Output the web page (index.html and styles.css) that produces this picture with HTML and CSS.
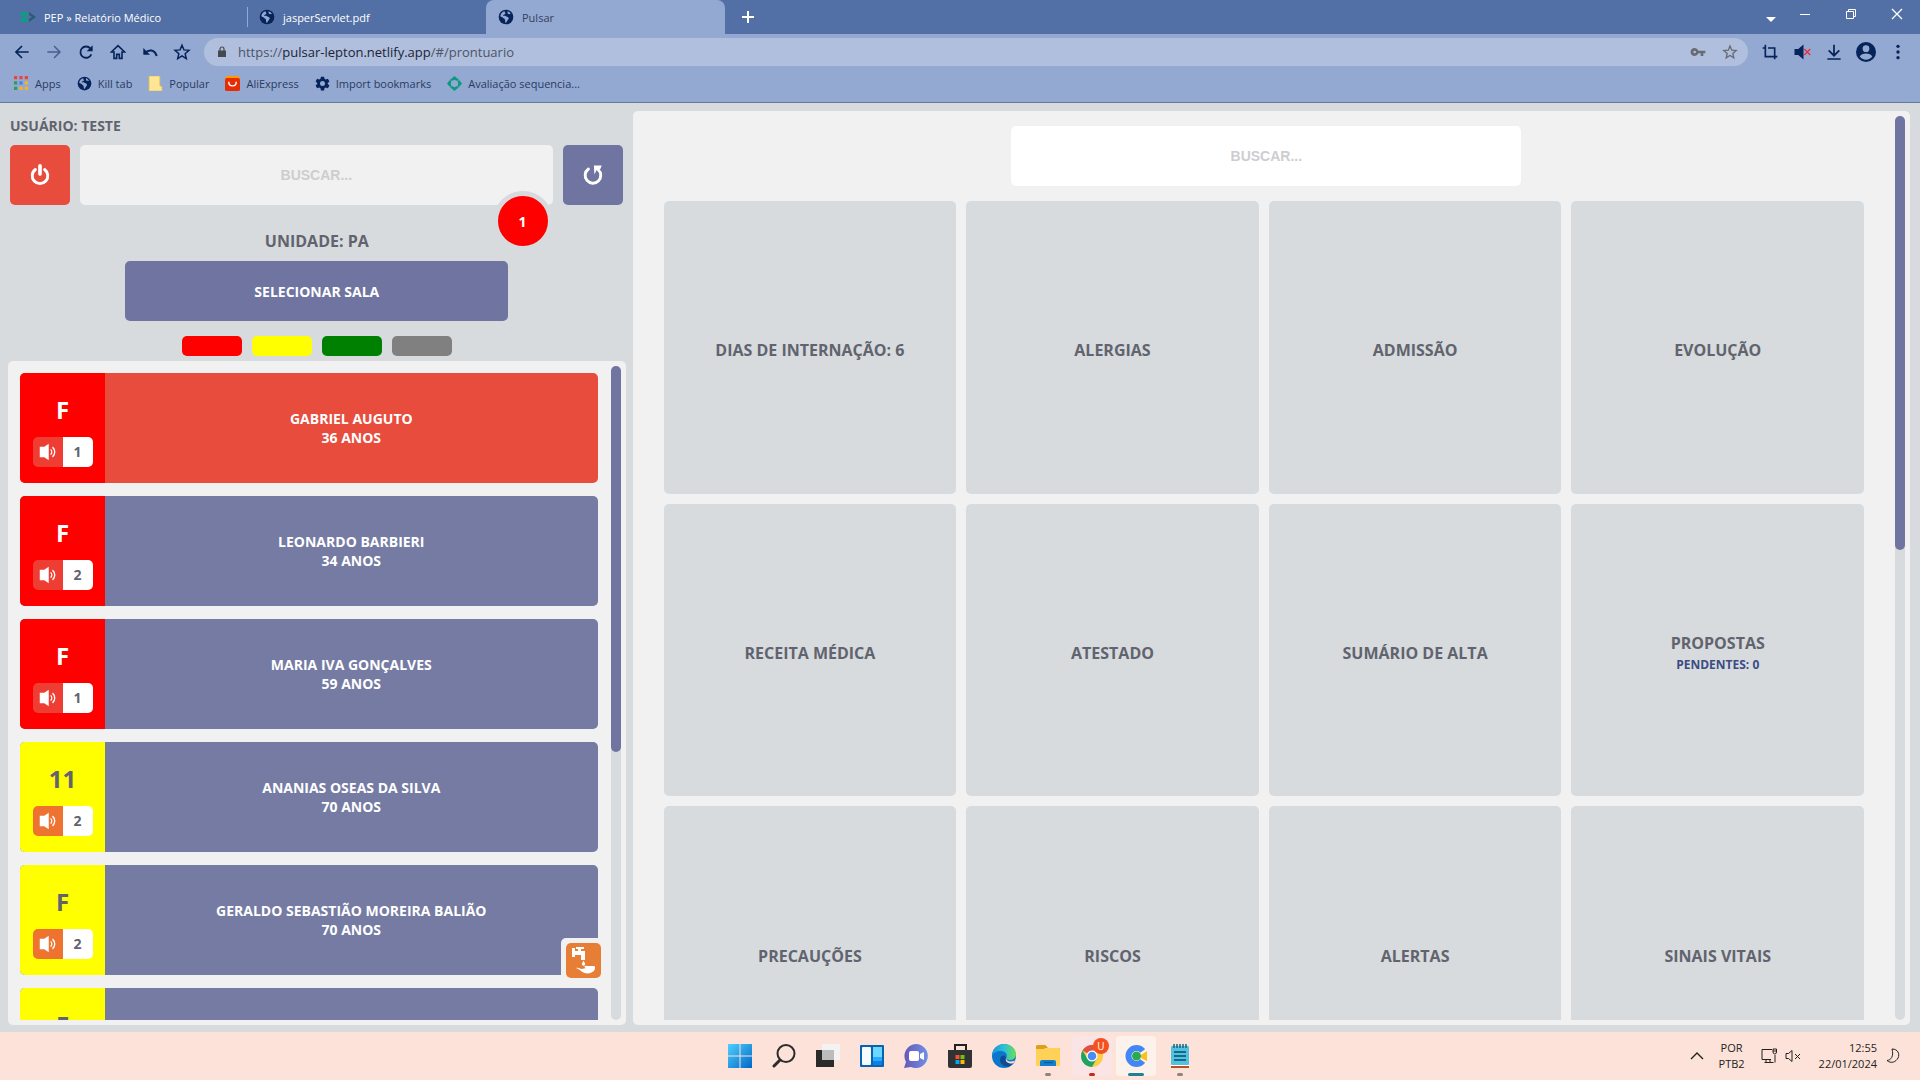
FILE: index.html
```html
<!DOCTYPE html>
<html lang="pt-BR">
<head>
<meta charset="utf-8">
<title>Pulsar</title>
<link rel="stylesheet" href="styles.css">
</head>
<body>
<svg class="defs" aria-hidden="true">
  <symbol id="globe" viewBox="0 0 24 24"><circle cx="12" cy="12" r="11" fill="#06235a"/><path d="M10 3.5c-3 .7-6 3.300-6.500 7 1 2 3.500 1.500 4.500 3 .8 1.500 2 .8 2.500 2.500l.5 4.500c2 .2 2-2 3-3 .5-1.500 2.500-2 2-4-.8-2-3.500-1.500-4.500-3-1.500-1-4 .5-4-1 .5-1.500 3-1 3.500-2.500.3-1.300-1.300-1.500-1-3.500z" fill="#93a9d2"/><path d="M14 3.500c1 1.500-.5 3 1.500 4 1.500.5 2.500-.2 4 .5-1-2.300-3-4-5.500-4.500z" fill="#93a9d2"/></symbol>
  <symbol id="star" viewBox="0 0 24 24"><path d="M12 3l2.600 6.200 6.700.6-5.100 4.400 1.500 6.600-5.700-3.500-5.700 3.500 1.500-6.600-5.100-4.400 6.700-.6z" fill="none" stroke="currentColor" stroke-width="2"/></symbol>
  <symbol id="sound" viewBox="0 0 24 24"><path d="M1 5h6l6-4v22l-6-4H1z" fill="currentColor"/><path d="M15.500 8.500c2 2 2 5 0 7M18 5.500c4 3.500 4 9.500 0 13" fill="none" stroke="currentColor" stroke-width="1.800"/></symbol>
</svg>

<header class="browser">
  <div class="tabstrip">
    <div class="tab">
      <svg viewBox="0 0 16 16"><path d="M0 3h8v3H5l2 2-2 2h3v3H0v-2l3-3-3-3z" fill="#129a86"/><path d="M9 3l7 5-7 5v-3l3-2-3-2z" fill="#2b5d70"/></svg>
      <span>PEP » Relatório Médico</span>
    </div>
    <div class="tab tab-divided"><svg><use href="#globe"/></svg><span>jasperServlet.pdf</span></div>
    <div class="tab tab-active"><svg><use href="#globe"/></svg><span>Pulsar</span></div>
    <button class="new-tab" aria-label="Nova guia"><svg viewBox="0 0 12 12"><path d="M6 0v12M0 6h12" stroke="#fff" stroke-width="2"/></svg></button>
    <div class="window-buttons">
      <button class="caret" aria-label="Pesquisar guias"><svg viewBox="0 0 12 12"><path d="M1 5h10L6 10z" fill="#fff"/></svg></button>
      <button aria-label="Minimizar"><svg viewBox="0 0 12 12"><path d="M1 6.500h10" stroke="#fff"/></svg></button>
      <button aria-label="Restaurar"><svg viewBox="0 0 12 12"><path d="M1.500 3.500h7v7h-7zM3.500 3V1.500h7v7H9" fill="none" stroke="#fff"/></svg></button>
      <button aria-label="Fechar"><svg viewBox="0 0 12 12"><path d="M1 1l10 10M11 1L1 11" stroke="#fff" stroke-width="1.300"/></svg></button>
    </div>
  </div>

  <div class="toolbar">
    <button aria-label="Voltar"><svg viewBox="0 0 24 24"><path d="M22 12H4M12 3l-9 9 9 9" fill="none" stroke="currentColor" stroke-width="2.600"/></svg></button>
    <button class="faded" aria-label="Avançar"><svg viewBox="0 0 24 24"><path d="M2 12h18M12 3l9 9-9 9" fill="none" stroke="currentColor" stroke-width="2.200"/></svg></button>
    <button aria-label="Recarregar"><svg viewBox="0 0 24 24"><path d="M20 15.500A8.500 8.500 0 1 1 18.500 6.500" fill="none" stroke="currentColor" stroke-width="2.800"/><path d="M22 2v9h-9z" fill="currentColor"/></svg></button>
    <button aria-label="Página inicial"><svg viewBox="0 0 24 24"><path d="M6 12v9.500h4v-6h4v6h4V12h4L12 2.500 2 12z" fill="none" stroke="currentColor" stroke-width="2.400"/></svg></button>
    <button aria-label="Desfazer"><svg viewBox="0 0 24 24"><path d="M2 6v10h10z" fill="currentColor"/><path d="M5 13c5-5 14-5 17 5" fill="none" stroke="currentColor" stroke-width="3"/></svg></button>
    <button aria-label="Favoritos"><svg class="big"><use href="#star"/></svg></button>
    <div class="omnibox">
      <svg class="lock" viewBox="0 0 24 24"><path d="M4 9h16v13H4z" fill="#444950"/><path d="M8 10V6a4 4 0 0 1 8 0v4" fill="none" stroke="#444950" stroke-width="2.400"/></svg>
      <span class="url">https://<b>pulsar-lepton.netlify.app</b>/#/prontuario</span>
      <button aria-label="Senhas"><svg viewBox="0 0 24 24"><path d="M7 6a6 6 0 1 0 5.600 8H16v4h4v-4h3v-4H12.600A6 6 0 0 0 7 6zm0 4a2 2 0 1 1 0 4 2 2 0 0 1 0-4z" fill="currentColor" fill-rule="evenodd"/></svg></button>
      <button aria-label="Adicionar aos favoritos"><svg><use href="#star"/></svg></button>
    </div>
    <button aria-label="Recortar"><svg viewBox="0 0 24 24"><path d="M1 6h4v13h18M5 1v6M9 6h10v17" fill="none" stroke="currentColor" stroke-width="2.500"/></svg></button>
    <button aria-label="Sem som"><svg class="big" viewBox="0 0 24 24"><path d="M2 8h5l7-6v20l-7-6H2z" fill="currentColor"/><path d="M15 8l8 8M23 8l-8 8" stroke="#ef2b3b" stroke-width="1.800"/></svg></button>
    <button aria-label="Downloads"><svg viewBox="0 0 24 24"><path d="M12 1v16M4 9.500l8 8 8-8M2 22.500h20" fill="none" stroke="currentColor" stroke-width="2.600"/></svg></button>
    <button aria-label="Perfil"><svg class="profile" viewBox="0 0 24 24"><circle cx="12" cy="12" r="12" fill="currentColor"/><circle cx="12" cy="8" r="4" fill="#93a9d2"/><path d="M4.500 17.500c2-5 13-5 15 0-3 5-12 5-15 0z" fill="#93a9d2"/></svg></button>
    <button aria-label="Menu"><svg viewBox="0 0 24 24" fill="currentColor"><circle cx="12" cy="3.500" r="2.500"/><circle cx="12" cy="12" r="2.500"/><circle cx="12" cy="20.500" r="2.500"/></svg></button>
  </div>

  <nav class="bookmarks" aria-label="Favoritos">
    <a href="#apps"><svg viewBox="0 0 14 14"><path d="M0 0h3v3H0zM5 0h3v3H5zM10 0h3v3h-3z" fill="#e8453c"/><path d="M0 5h3v3H0zM0 10h3v3H0z" fill="#2d9c57"/><path d="M5 5h3v3H5z" fill="#3a84f0"/><path d="M10 5h3v3h-3zM5 10h3v3H5zM10 10h3v3h-3z" fill="#f5b521"/></svg>Apps</a>
    <a href="#kill"><svg><use href="#globe"/></svg>Kill tab</a>
    <a href="#popular"><svg viewBox="0 0 14 14"><path d="M1 0h10v9l2 1v4H1z" fill="#ffe694" stroke="#e8c252" stroke-width=".7"/></svg>Popular</a>
    <a href="#ali"><svg viewBox="0 0 16 16"><path d="M0 2l2-2h12l2 2v4H0z" fill="#ff9a00"/><rect y="2" width="16" height="14" rx="2" fill="#e62e04"/><path d="M4 6c0 6 8 6 8 0" fill="none" stroke="#fff" stroke-width="1.500"/></svg>AliExpress</a>
    <a href="#import"><svg viewBox="0 0 24 24"><path d="M9.500 1h5l.7 3.500 2 1.200 3.400-1.200 2.500 4.300-2.700 2.400v1.600l2.700 2.400-2.500 4.300-3.400-1.200-2 1.200-.7 3.500h-5l-.7-3.500-2-1.200-3.400 1.200L.900 15.200l2.700-2.400v-1.600L.900 8.800l2.500-4.300 3.400 1.200 2-1.200zM12 8a4 4 0 1 0 0 8 4 4 0 0 0 0-8z" fill="#06235a" fill-rule="evenodd"/></svg>Import bookmarks</a>
    <a href="#avaliacao"><svg viewBox="0 0 24 24" fill="#0b9a80"><path d="M12 0l7 6-3 2-4-2-4 2-3-2zM12 24l7-6-3-2-4 2-4-2-3 2zM0 12l5-6 2 3-1 3 1 3-2 3zM24 12l-5-6-2 3 1 3-1 3 2 3z"/></svg>Avaliação sequencia...</a>
  </nav>
</header>

<main class="app">
  <aside class="sidebar">
    <p class="user">USUÁRIO: TESTE</p>
    <div class="search-row">
      <button class="square square-red" aria-label="Sair"><svg viewBox="0 0 24 24"><path d="M7 6a8.500 8.500 0 1 0 10 0" fill="none" stroke="#fff" stroke-width="3.200" stroke-linecap="round"/><path d="M12 2v9" stroke="#fff" stroke-width="4" stroke-linecap="round"/></svg></button>
      <div class="search-wrap">
        <input class="field" type="text" placeholder="BUSCAR..." aria-label="Buscar paciente">
        <span class="counter">1</span>
      </div>
      <button class="square" aria-label="Atualizar"><svg viewBox="0 0 24 24"><path d="M7 5.500a8.500 8.500 0 1 0 10.500.5" fill="none" stroke="#fff" stroke-width="3.200" stroke-linecap="round"/><path d="M13 1.500h8.500L20 5.500l-4 1-2.500 5z" fill="#fff"/></svg></button>
    </div>
    <p class="unit">UNIDADE: PA</p>
    <button class="select-room">SELECIONAR SALA</button>
    <div class="filters">
      <button class="chip chip-red" aria-label="Vermelho"></button>
      <button class="chip chip-yellow" aria-label="Amarelo"></button>
      <button class="chip chip-green" aria-label="Verde"></button>
      <button class="chip chip-gray" aria-label="Cinza"></button>
    </div>
    <section class="panel patients">
      <div class="patient-list">
        <article class="patient patient-selected">
          <div class="bed bed-red"><strong>F</strong><div class="call"><button aria-label="Chamar"><svg><use href="#sound"/></svg></button><span>1</span></div></div>
          <button class="name">GABRIEL AUGUTO<br>36 ANOS</button>
        </article>
        <article class="patient">
          <div class="bed bed-red"><strong>F</strong><div class="call"><button aria-label="Chamar"><svg><use href="#sound"/></svg></button><span>2</span></div></div>
          <button class="name">LEONARDO BARBIERI<br>34 ANOS</button>
        </article>
        <article class="patient">
          <div class="bed bed-red"><strong>F</strong><div class="call"><button aria-label="Chamar"><svg><use href="#sound"/></svg></button><span>1</span></div></div>
          <button class="name">MARIA IVA GONÇALVES<br>59 ANOS</button>
        </article>
        <article class="patient">
          <div class="bed bed-yellow"><strong>11</strong><div class="call"><button aria-label="Chamar"><svg><use href="#sound"/></svg></button><span>2</span></div></div>
          <button class="name">ANANIAS OSEAS DA SILVA<br>70 ANOS</button>
        </article>
        <article class="patient">
          <div class="bed bed-yellow"><strong>F</strong><div class="call"><button aria-label="Chamar"><svg><use href="#sound"/></svg></button><span>2</span></div></div>
          <button class="name">GERALDO SEBASTIÃO MOREIRA BALIÃO<br>70 ANOS</button>
          <span class="hygiene"><svg viewBox="0 0 35 35" fill="#fff"><path d="M10 4h8v2h-3v2h4v9h-4v-5H9v2H6V5h3v3h3V6h-2z"/><path d="M17.500 17.500l1.500 3a1.600 1.600 0 1 1-3 0z"/><path d="M10 25c3-1 4 1 6 1l4-1c-3-1-1-3 1-2h7c1 0 1.500 2 .5 4-2 3-6 4-10 3-3-1-5-4-8.500-5z"/></svg></span>
        </article>
        <article class="patient">
          <div class="bed bed-yellow"><strong>F</strong></div>
          <button class="name"></button>
        </article>
      </div>
      <div class="track"><div class="thumb thumb-patients"></div></div>
    </section>
  </aside>

  <section class="panel record">
    <div class="record-scroll">
      <input class="field field-white" type="text" placeholder="BUSCAR..." aria-label="Buscar no prontuário">
      <div class="tiles">
        <button>DIAS DE INTERNAÇÃO: 6</button>
        <button>ALERGIAS</button>
        <button>ADMISSÃO</button>
        <button>EVOLUÇÃO</button>
        <button>RECEITA MÉDICA</button>
        <button>ATESTADO</button>
        <button>SUMÁRIO DE ALTA</button>
        <button>PROPOSTAS<small>PENDENTES: 0</small></button>
        <button>PRECAUÇÕES</button>
        <button>RISCOS</button>
        <button>ALERTAS</button>
        <button>SINAIS VITAIS</button>
      </div>
    </div>
    <div class="track"><div class="thumb thumb-record"></div></div>
  </section>
</main>

<footer class="taskbar">
  <div class="tb-side"></div>
  <div class="tb-apps">
    <button aria-label="Iniciar"><svg viewBox="0 0 24 24"><defs><linearGradient id="win" x2="1" y2="1"><stop stop-color="#4fd0ff"/><stop offset="1" stop-color="#0067c7"/></linearGradient></defs><path d="M0 0h11.500v11.500H0zM12.500 0H24v11.500H12.500zM0 12.500h11.500V24H0zM12.500 12.500H24V24H12.500z" fill="url(#win)"/></svg></button>
    <button aria-label="Pesquisar"><svg viewBox="0 0 24 24"><circle cx="14" cy="9.500" r="8.500" fill="none" stroke="#2b2b2b" stroke-width="2"/><path d="M8 16l-6 6" stroke="#2b2b2b" stroke-width="3" stroke-linecap="round"/></svg></button>
    <button aria-label="Visão de tarefas"><svg viewBox="0 0 24 24"><path d="M6 0h18v16H6z" fill="#f3f3f3"/><path d="M0 6h18v17H0z" fill="#2a2a2a"/><path d="M6 6h12v10H6z" fill="#bcbcbc"/></svg></button>
    <button aria-label="Widgets"><svg viewBox="0 0 24 24"><rect y="1" width="24" height="22" rx="1" fill="#0863b0"/><rect x="2" y="3" width="9" height="18" rx="1" fill="#f7fbff"/><path d="M13 3h9v10h-9z" fill="#6cd8ff"/><path d="M13 13h9v4h-9z" fill="#27aaff"/><path d="M13 17h9v4h-9z" fill="#0a80e6"/></svg></button>
    <button aria-label="Chat"><svg viewBox="0 0 24 24"><defs><linearGradient id="cht" x2="1"><stop stop-color="#6558b8"/><stop offset="1" stop-color="#6f90e8"/></linearGradient></defs><path d="M12 0a12 12 0 1 1-5 23L0 24l2-6A12 12 0 0 1 12 0z" fill="url(#cht)"/><rect x="5" y="7" width="10" height="10" rx="2" fill="#fff"/><path d="M16 10l4-2v8l-4-2z" fill="#fff"/></svg></button>
    <button aria-label="Loja"><svg viewBox="0 0 24 24"><path d="M7 7V1h11v6" fill="none" stroke="#222" stroke-width="2"/><path d="M0 6h24v16q0 2-2 2H2q-2 0-2-2z" fill="#303234"/><path d="M7.500 11h4v4h-4z" fill="#f35325"/><path d="M12.500 11h4v4h-4z" fill="#81bc06"/><path d="M7.500 16h4v4h-4z" fill="#05a6f0"/><path d="M12.500 16h4v4h-4z" fill="#ffba08"/></svg></button>
    <button aria-label="Edge"><svg viewBox="0 0 24 24"><defs><linearGradient id="edg" x2="1"><stop stop-color="#1794d8"/><stop offset=".5" stop-color="#2cc0d8"/><stop offset="1" stop-color="#6ce04c"/></linearGradient></defs><circle cx="12" cy="12" r="12" fill="#0c75cc"/><path d="M0 11C1 4 6 0 12 0c7 0 12 5 12 10 0 4-3 6-6 6-3 0-4-1-3.500-2.500C16 10 13 7 9 7c-4 0-8 2-9 5z" fill="url(#edg)"/><path d="M14 14c-1-4-6-3-6 2 0 4 5 8 10 6 2-1 4-3 4.500-4-3 1.500-9 1-8.500-4z" fill="#104a91"/><path d="M14.300 13.500c-.8 4 4.700 5 8.700 3l-1.500 2.700c-4 1.300-9.500-1.200-7.200-5.700z" fill="#fce0d7"/></svg></button>
    <button class="running" aria-label="Explorador de Arquivos"><svg viewBox="0 0 24 24"><path d="M0 3q0-2 2-2h7l3 3h12v5H0z" fill="#d99b12"/><rect y="4" width="24" height="18" rx="1" fill="#ffd257"/><path d="M0 5h8l3-2.500L9 1H2Q0 1 0 3z" fill="#dda01b"/><path d="M4 22v-4q0-2 2-2h12q2 0 2 2v4z" fill="#1181cf"/><path d="M8 18.500h9" stroke="#0b5da3" stroke-width="1.500"/></svg></button>
    <button class="running chrome" aria-label="Chrome"><svg viewBox="0 0 24 24"><circle cx="12" cy="12" r="11" fill="#fccd47"/><path d="M12 12L2.500 6.500A11 11 0 0 1 21.500 6.500H12z" fill="#df5145"/><path d="M2.500 6.500A11 11 0 0 0 12 23l5-9-5 2-5-2z" fill="#1fa45f"/><circle cx="12" cy="12" r="5.500" fill="#fff"/><circle cx="12" cy="12" r="4.300" fill="#4a8bf5"/></svg><span class="u-badge">U</span></button>
    <button class="running active" aria-label="Chromium"><svg viewBox="0 0 24 24"><circle cx="12.500" cy="12" r="8" fill="#fff" stroke="#4387f5" stroke-width="6"/><path d="M24 3l-8 6v6l8 6z" fill="#fdf1ec"/><path d="M23 7l-6 4v3l6 3z" fill="#fbc116"/><circle cx="12.500" cy="12" r="4.500" fill="#2da94f"/></svg></button>
    <button class="running" aria-label="Bloco de Notas"><svg viewBox="0 0 24 24"><path d="M3 20h18v4H3z" fill="#b7511d"/><path d="M3 20h18v2H3z" fill="#fff"/><rect x="3" y="2" width="18" height="19" rx="1" fill="#54c0de"/><path d="M6 0v4M9 0v4M12 0v4M15 0v4M18 0v4" stroke="#17617c" stroke-width="1.500"/><path d="M6 8h12M6 12h12M6 16h12" stroke="#126b8c" stroke-width="1.800"/></svg></button>
  </div>
  <div class="tb-side tb-tray">
    <svg class="tray-icon" viewBox="0 0 16 16"><path d="M2 11l6-6 6 6" fill="none" stroke="#222" stroke-width="1.400"/></svg>
    <div class="tray-text lang">POR<br>PTB2</div>
    <svg class="tray-icon" viewBox="0 0 16 16"><path d="M11 1.500H1v10h9M3.500 14.500h9M5 12v2M9 12v2M14 7v7.500M12 1h3.500v3q0 2-1.700 2T12 4zM12 3h3.500" fill="none" stroke="#222"/></svg>
    <svg class="tray-icon" viewBox="0 0 16 16"><path d="M1 5.500h2.500L7 2.500v11l-3.500-3H1zM10 6l5 5M15 6l-5 5" fill="none" stroke="#222"/></svg>
    <div class="tray-text clock">12:55<br>22/01/2024</div>
    <svg class="tray-icon" viewBox="0 0 16 16"><path d="M7 1c6 0 8 5 6 9s-7 6-11 2.500c4-.5 7-4 5-11.500z" fill="none" stroke="#222"/></svg>
  </div>
</footer>
</body>
</html>
```
FILE: styles.css
```css
* { box-sizing: border-box; }

body {
  margin: 0;
  height: 100vh;
  display: flex;
  flex-direction: column;
  overflow: hidden;
  background: #d7dbdd;
  color: #61636e;
  font-family: "Open Sans", "Noto Sans", sans-serif;
}

button {
  margin: 0;
  padding: 0;
  border: 0;
  background: none;
  color: inherit;
  font: inherit;
}

p { margin: 0; }
svg { display: block; flex: none; }
.defs { display: none; }

/* Browser window */
.browser {
  flex: none;
  background: #93a9d2;
  border-bottom: 1px solid #65789f;
  color: #06235a;
  font-size: 11px;
}

.tabstrip {
  display: flex;
  height: 34px;
  padding-left: 8px;
  background: #5270a5;
}

.tab {
  flex: 0 1 239px;
  display: flex;
  align-items: center;
  gap: 8px;
  padding: 0 12px;
  color: #fff;
  white-space: nowrap;
}

.tab svg { width: 16px; height: 16px; }

.tab-divided {
  background: linear-gradient(#93a9d2, #93a9d2) left center / 1px 20px no-repeat;
}

.tab-active {
  background: #93a9d2;
  border-radius: 8px 8px 0 0;
  color: #33415f;
}

.new-tab { width: 46px; display: grid; place-items: center; }
.new-tab svg { width: 12px; height: 12px; }

.window-buttons { margin-left: auto; display: flex; height: 28px; }
.window-buttons button { width: 46px; display: grid; place-items: center; }
.window-buttons .caret { width: 22px; padding-top: 8px; }
.window-buttons svg { width: 12px; height: 12px; }

.toolbar {
  display: flex;
  align-items: center;
  height: 36px;
  padding: 0 6px;
}

.toolbar button { width: 32px; height: 28px; display: grid; place-items: center; flex: none; }
.toolbar svg { width: 16px; height: 16px; }
.toolbar .big { width: 18px; height: 18px; }
.toolbar .profile { width: 20px; height: 20px; }
.toolbar .faded { opacity: .55; }

.omnibox {
  flex: 1;
  display: flex;
  align-items: center;
  height: 28px;
  margin: 0 6px;
  padding: 0 2px 0 12px;
  border-radius: 14px;
  background: #afbfdd;
  color: #686b72;
}

.toolbar .lock { width: 12px; height: 14px; }
.url { flex: 1; padding-left: 10px; font-size: 13px; color: #4d5567; }
.url b { font-weight: 400; color: #1c2436; }

.bookmarks {
  display: flex;
  align-items: center;
  gap: 16px;
  height: 32px;
  padding: 0 14px 5px;
}

.bookmarks a {
  display: flex;
  align-items: center;
  gap: 6px;
  color: #2a3b60;
  text-decoration: none;
}

.bookmarks svg { width: 15px; height: 15px; }

/* Application */
.app { flex: 1; min-height: 0; display: flex; }

.sidebar {
  flex: 0 0 calc(33% - 1px);
  display: flex;
  flex-direction: column;
  min-height: 0;
  padding: 12px 7px 7px 8px;
}

.user {
  padding-left: 2px;
  font-size: 14px;
  line-height: 22px;
  font-weight: 700;
}

.search-row { display: flex; gap: 10px; margin-top: 8px; padding: 0 3px 0 2px; }

.square {
  flex: none;
  width: 60px;
  height: 60px;
  display: grid;
  place-items: center;
  border-radius: 5px;
  background: #6f74a0;
}

.square-red { background: #e84c3d; }
.square svg { width: 22px; height: 22px; }

.search-wrap { flex: 1; position: relative; }

.field {
  display: block;
  width: 100%;
  height: 60px;
  border: 0;
  border-radius: 5px;
  background: #f1f1f1;
  text-align: center;
  font: 700 14px "Liberation Sans", Arial, sans-serif;
}

.field::placeholder { color: #cdcdd0; opacity: 1; }

.counter {
  position: absolute;
  right: 0;
  bottom: -46px;
  width: 60px;
  height: 60px;
  display: grid;
  place-items: center;
  border: 5px solid #d7dbdd;
  border-radius: 50%;
  background: #f00;
  color: #fff;
  font-size: 14px;
  font-weight: 700;
}

.unit {
  margin-top: 24px;
  text-align: center;
  font-size: 16px;
  line-height: 24px;
  font-weight: 700;
}

.select-room {
  align-self: center;
  width: 62%;
  height: 60px;
  margin-top: 8px;
  border-radius: 5px;
  background: #6f74a0;
  color: #fff;
  font-size: 14px;
  font-weight: 700;
}

.filters { display: flex; justify-content: center; gap: 10px; margin: 15px 0 5px; }
.chip { width: 60px; height: 20px; border-radius: 5px; }
.chip-red { background: #f00; }
.chip-yellow { background: #ff0; }
.chip-green { background: #008000; }
.chip-gray { background: #808080; }

.panel {
  display: flex;
  min-height: 0;
  padding: 5px;
  border-radius: 5px;
  background: #f1f1f1;
}

.patients { flex: 1; }

.patient-list {
  flex: 1;
  display: flex;
  flex-direction: column;
  gap: 13px;
  overflow: hidden;
  padding: 7px 13px 0 7px;
}

.track { flex: none; width: 10px; border-radius: 5px; background: #d7dbdd; }
.thumb { border-radius: 5px; background: #6f74a0; }
.thumb-patients { height: 59%; }
.thumb-record { height: 48%; }

.patient {
  position: relative;
  flex: none;
  display: flex;
  height: 110px;
  border-radius: 5px;
  background: #757ba3;
  color: #fff;
}

.patient-selected { background: #e84c3d; }

.bed {
  flex: none;
  width: 85px;
  display: flex;
  flex-direction: column;
  align-items: center;
  gap: 10px;
  padding-top: 20px;
  border-radius: 5px 0 0 5px;
}

.bed strong { font-size: 24px; line-height: 34px; }
.bed-red { background: #f00; }
.bed-yellow { background: #ff0; color: #61636e; }

.call {
  display: flex;
  width: 60px;
  height: 30px;
  border-radius: 5px;
  overflow: hidden;
  font-size: 14px;
  font-weight: 700;
}

.call button { width: 30px; display: grid; place-items: center; background: #ee3d32; color: #fff; }
.bed-yellow .call button { background: #ee7230; }
.call svg { width: 18px; height: 18px; }
.call span { flex: 1; background: #fff; color: #61636e; text-align: center; line-height: 30px; }

.name { flex: 1; font-size: 14px; line-height: 19px; font-weight: 700; }

.hygiene {
  position: absolute;
  right: -8px;
  bottom: -8px;
  border: 5px solid #f1f1f1;
  border-radius: 5px;
  background: #f1f1f1;
}

.hygiene svg { width: 35px; height: 35px; border-radius: 5px; background: #e67e35; }

.record { flex: 1; margin: 8px 10px 7px 0; }
.record-scroll { flex: 1; overflow: hidden; padding-top: 10px; }

.field-white {
  width: 510px;
  max-width: 100%;
  margin: 0 auto 15px;
  background: #fff;
}

.tiles {
  display: grid;
  grid-template-columns: repeat(4, 1fr);
  gap: 10px;
  padding: 0 31px 0 26px;
}

.tiles button {
  aspect-ratio: 1;
  display: flex;
  flex-direction: column;
  align-items: center;
  justify-content: center;
  padding-top: 6px;
  border-radius: 5px;
  background: #d7dbdd;
  font-size: 16px;
  line-height: 24px;
  font-weight: 700;
}

.tiles small { font-size: 12px; color: #3e4a86; line-height: 20px; }

/* Taskbar */
.taskbar {
  flex: none;
  display: flex;
  align-items: center;
  height: 48px;
  background: #fce2d8;
  color: #222;
}

.tb-side { flex: 1; }
.tb-apps { display: flex; gap: 4px; }

.tb-apps button {
  position: relative;
  width: 40px;
  height: 40px;
  display: grid;
  place-items: center;
  border-radius: 4px;
}

.tb-apps svg { width: 24px; height: 24px; }

.running::after {
  content: "";
  position: absolute;
  left: 17px;
  bottom: 0;
  width: 6px;
  height: 3px;
  border-radius: 2px;
  background: #8d8480;
}

.tb-apps .chrome { background: #fbe4e6; }
.chrome::after { background: #c42b1c; }
.tb-apps .active { background: #fdf1ec; }
.active::after { left: 12px; width: 16px; background: #1d8296; }

.u-badge {
  position: absolute;
  top: 2px;
  right: 3px;
  width: 16px;
  height: 16px;
  border-radius: 50%;
  background: #f4511e;
  color: #fff;
  font-size: 10px;
  line-height: 16px;
  text-align: center;
}

.tb-tray {
  display: flex;
  align-items: center;
  justify-content: flex-end;
}

.tray-icon { width: 16px; height: 16px; margin-left: 8px; }
.tray-icon:last-child { margin-right: 19px; }
.tray-text { font-size: 11px; line-height: 16px; }
.lang { margin: 0 8px 0 14px; text-align: center; }
.clock { margin-left: 18px; text-align: right; }
```
